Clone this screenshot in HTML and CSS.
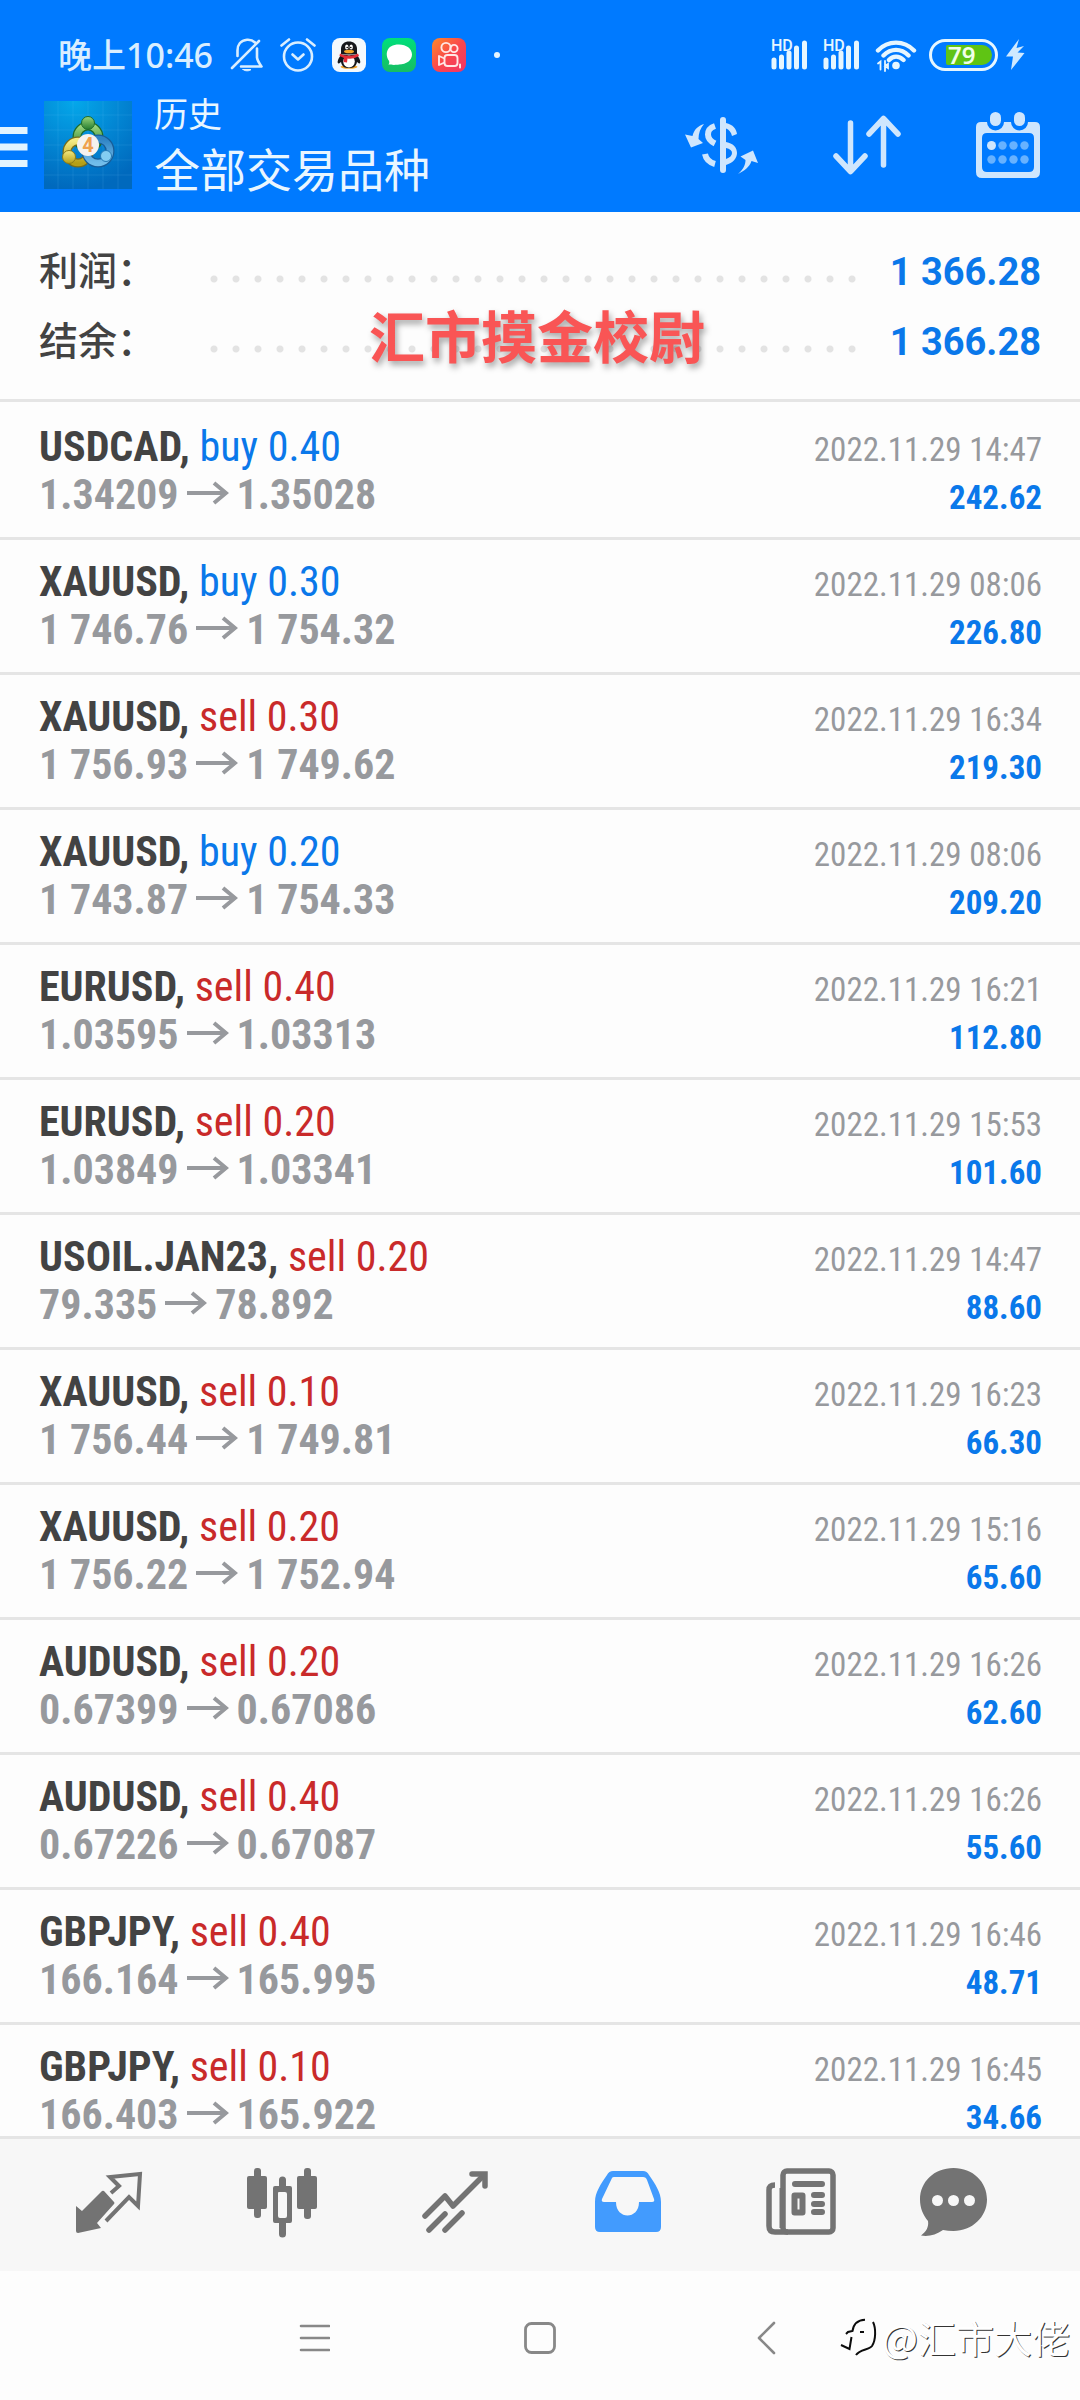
FILE: index.html
```html
<!DOCTYPE html>
<html lang="zh-CN">
<head>
<meta charset="utf-8">
<title>历史</title>
<meta name="viewport" content="width=device-width, initial-scale=1">
<link rel="stylesheet" href="styles.css">
</head>
<body>
<div class="app">
  <header class="top">
    <div class="status">
      <span class="clock">晚上10:46</span>
      <div class="notices">
        <svg width="34" height="34" viewBox="0 0 34 34" fill="none" stroke="#d9eeff" stroke-width="2.6" stroke-linecap="round" stroke-linejoin="round"><path d="M2 30 29 3M25 4.500C22.500 2.200 19.500 1.600 17 1.800 10.500 2.400 7.500 7 7.500 12.500V18M27 10.500V19.500C27.500 23 29 25 31.500 28.500H11"/><path d="M13 31.500h8c-1 1.800-7 1.800-8 0z" fill="#d9eeff" stroke-width="1"/></svg>
        <svg width="36" height="34" viewBox="0 0 36 34" fill="none" stroke="#d9eeff" stroke-width="2.600" stroke-linecap="round" stroke-linejoin="round"><circle cx="18" cy="18.500" r="14"/><path d="M12.500 16.500 18 21.500 23.500 16.500M1.500 7.500 9 1.500M34.500 7.500 27 1.500"/></svg>
        <svg width="34" height="34" viewBox="0 0 34 34"><rect width="34" height="34" rx="8" fill="#f4f9fd"/><ellipse cx="17" cy="28.800" rx="8.500" ry="2" fill="#f0a32c"/><path d="M9 17C5 22 5 26 7 25.500L9 24C10 29 13 30 17 30S24 29 25 24L27 25.500C29 26 29 22 25 17Z" fill="#15171c"/><ellipse cx="17" cy="23.500" rx="5.800" ry="6" fill="#fff"/><path d="M9 16.500V11C9 6 12.500 3.500 17 3.500S25 6 25 11V16.500Z" fill="#15171c"/><ellipse cx="14.800" cy="9" rx="1.700" ry="2.500" fill="#fff"/><ellipse cx="19.200" cy="9" rx="1.700" ry="2.500" fill="#fff"/><circle cx="15.200" cy="9.500" r=".8"/><circle cx="18.800" cy="9.500" r=".8"/><ellipse cx="17" cy="13.500" rx="5" ry="1.800" fill="#f4a52b"/><path d="M8 15.500C13 18.500 21 18.500 26 15.500L27 18C22 21 18 21 15.500 20.500L15 24.500 11.500 24 12 20 7.500 18Z" fill="#e22c38"/></svg>
        <svg width="34" height="34" viewBox="0 0 34 34"><defs><linearGradient id="msg" x2="0" y2="1"><stop stop-color="#00df7b"/><stop offset="1" stop-color="#17bd63"/></linearGradient></defs><rect width="34" height="34" rx="8" fill="url(#msg)"/><path d="M17 6.500C24.500 6.500 30 10.800 30 16.500S24.500 26.500 17 26.500C15 27 9 27 6.500 26.500 7.500 25 7.500 24 6.800 22.500 3 17 3.800 6.500 17 6.500Z" fill="#fff"/></svg>
        <svg width="34" height="34" viewBox="0 0 34 34" fill="none" stroke="#ffe7e5" stroke-width="1.900" stroke-linejoin="round"><defs><linearGradient id="kw" x2="1" y2="1"><stop stop-color="#ff8a2a"/><stop offset=".5" stop-color="#f9484c"/><stop offset="1" stop-color="#f23366"/></linearGradient></defs><rect width="34" height="34" rx="8" fill="url(#kw)" stroke="none"/><circle cx="14" cy="9.500" r="4.600"/><circle cx="22" cy="10.500" r="3.600"/><rect x="12.500" y="17" width="13" height="11" rx="3"/><path d="M12.500 20.500 7 18V27L12.500 24.500"/><path d="M28 26.500v3" stroke-linecap="round"/></svg>
        <span class="more-dot"></span>
      </div>
      <div class="system">
        <svg class="signal" width="36" height="34" viewBox="0 0 36 34"><text class="hd" x="0" y="13">HD</text><g stroke="#e6f6ff" stroke-width="5" stroke-linecap="round"><path d="M3 22v7M10.500 19v10M18 15v14M25.500 10v19M33.500 5v24"/></g></svg>
        <svg class="signal" width="36" height="34" viewBox="0 0 36 34"><text class="hd" x="0" y="13">HD</text><g stroke="#e6f6ff" stroke-width="5" stroke-linecap="round"><path d="M3 22v7M10.500 19v10M18 15v14M25.500 10v19M33.500 5v24"/></g></svg>
        <svg class="wifi" width="42" height="34" viewBox="0 0 42 34" fill="none" stroke="#e6f6ff" stroke-width="4.400" stroke-linecap="round"><path d="M3 12.500C13 2 29 2 39 12.500M8.500 17.500C16 10 26 10 33.500 17.500M14 22C18 17.500 24 17.500 28.500 22"/><circle cx="21" cy="27.500" r="3.800" fill="#e6f6ff" stroke="none"/><path d="M3 25.500 5.500 23.500V31.500M10 23V33M10 28l3-2v4z" stroke-width="1.800"/></svg>
        <svg class="battery" width="69" height="32" viewBox="0 0 69 32"><rect x="1.500" y="1.500" width="66" height="29" rx="14.500" fill="none" stroke="#e6f6ff" stroke-width="3"/><path d="M17 8Q17 6 19 6H53A10 10 0 0 1 53 26H19Q17 26 17 24Z" fill="#5fc414"/><text class="charge" x="19" y="25">79</text></svg>
        <svg width="19" height="32" viewBox="0 0 19 32"><path d="M13 0 0 17.500 7 17.500 5 31 18.500 14 11.500 13.500 18 7 10.500 9Z" fill="#cfe9ff"/></svg>
      </div>
    </div>
    <div class="toolbar">
      <button class="icon-btn menu" aria-label="菜单"><svg width="28" height="42" viewBox="0 0 28 42"><path d="M0 1h27.500v7H0zM0 17.500h27.500v7H0zM0 34h27.500v7H0z" fill="#e3f4ff"/></svg></button>
      <svg class="logo" width="88" height="88" viewBox="0 0 88 88">
        <defs>
          <radialGradient id="bg" cx=".35" cy="0" r="1"><stop stop-color="#04a8ea"/><stop offset=".55" stop-color="#0284d2"/><stop offset="1" stop-color="#0069bd"/></radialGradient>
          <linearGradient id="gr" x2="0" y2="1"><stop stop-color="#9bd67c"/><stop offset="1" stop-color="#257d2f"/></linearGradient>
          <linearGradient id="ye" x2="0" y2="1"><stop stop-color="#f3ea83"/><stop offset="1" stop-color="#b59f16"/></linearGradient>
          <linearGradient id="bl" x2="0" y2="1"><stop stop-color="#2e83c4"/><stop offset="1" stop-color="#72bdea"/></linearGradient>
        </defs>
        <rect width="88" height="88" fill="url(#bg)"/>
        <path d="M14 0v88M29 0v88M44 0v88M59 0v88M74 0v88M0 14h88M0 29h88M0 44h88M0 59h88M0 74h88" stroke="#7fd4ff" stroke-opacity=".13"/>
        <circle cx="44" cy="36" r="11" fill="none" stroke="#1d6b2a" stroke-width="9"/>
        <circle cx="44" cy="36" r="11" fill="none" stroke="url(#gr)" stroke-width="6.500"/>
        <circle cx="34" cy="51" r="11" fill="none" stroke="#776d1b" stroke-width="9"/>
        <circle cx="34" cy="51" r="11" fill="none" stroke="url(#ye)" stroke-width="6.500"/>
        <circle cx="54" cy="50" r="12" fill="none" stroke="#185d98" stroke-width="9"/>
        <circle cx="54" cy="50" r="12" fill="none" stroke="url(#bl)" stroke-width="6.500"/>
        <circle cx="44" cy="22" r="6.500" fill="url(#gr)" stroke="#1d6b2a"/>
        <circle cx="25" cy="56" r="6.500" fill="url(#ye)" stroke="#8a7a18"/>
        <circle cx="62" cy="55" r="5.500" fill="#84cdf2" stroke="#2679b5"/>
        <circle cx="44" cy="44" r="11" fill="#f5f2ee"/>
        <text class="four" x="44" y="51" text-anchor="middle">4</text>
      </svg>
      <div class="titles">
        <span class="subtitle">历史</span>
        <h1>全部交易品种</h1>
      </div>
      <div class="actions">
        <button class="icon-btn" aria-label="交易品种"><svg width="74" height="68" viewBox="0 0 74 68"><path d="M36 9a3 3 0 0 1 6 0V12C49 13.500 52.500 18 53 23L48 25C47 21 45 18.500 42 17.500V31C50 32.500 53 37 53 42S49 52 42 54V59a3 3 0 0 1-6 0ZM42 37V48C46 46.500 48 44.500 48 42S46 38 42 37Z" fill="#cfe6fd"/><path d="M31 15C25 17 24 20 24 23.500S26 30 31 32.500M21 43C22 48 25.500 51.500 31 53" fill="none" stroke="#cfe6fd" stroke-width="6"/><path d="M20 13C14 15 10 18.500 8.500 25L1 23.500 7 36.500 19 32 14.500 28C14.500 22 16.500 17 20 13Z" fill="#cfe6fd"/><path d="M54 63C59.500 58 61.500 54 61.500 49L56.500 45.500 69 39.500 74 52 67.500 50C65.500 56 60 60 54 63Z" fill="#cfe6fd"/></svg></button>
        <button class="icon-btn" aria-label="排序"><svg width="68" height="68" viewBox="0 0 68 68" fill="none" stroke="#cfe6fd" stroke-width="5.500" stroke-linecap="round" stroke-linejoin="round"><path d="M17.500 12V60M3 45 17.500 60.500 32 45M50.500 54V8M36 23 50.500 7.500 65 23"/></svg></button>
        <button class="icon-btn" aria-label="日期"><svg width="64" height="68" viewBox="0 0 64 68"><path d="M5 11H11A8 8 0 0 0 28 11H35A8 8 0 0 0 52 11H59Q64 11 64 16V61Q64 67 58 67H6Q0 67 0 61V16Q0 11 5 11ZM11 22Q6 22 6 27V56Q6 61 11 61H53Q58 61 58 56V27Q58 22 53 22Z" fill="#cfe6fd" fill-rule="evenodd"/><rect x="14" y="1" width="11" height="14" rx="5.500" fill="#cfe6fd"/><rect x="38" y="1" width="11" height="14" rx="5.500" fill="#cfe6fd"/><circle cx="15.500" cy="34.500" r="4.500" fill="#cfe6fd"/><g fill="#67b2ff"><circle cx="26.500" cy="34.500" r="4.200"/><circle cx="37.500" cy="34.500" r="4.200"/><circle cx="48.500" cy="34.500" r="4.200"/><circle cx="15.500" cy="48.500" r="4.200"/><circle cx="26.500" cy="48.500" r="4.200"/><circle cx="37.500" cy="48.500" r="4.200"/><circle cx="48.500" cy="48.500" r="4.200"/></g></svg></button>
      </div>
    </div>
  </header>

  <section class="summary">
    <dl>
      <div class="sum-row"><dt>利润：</dt><dd class="dots"></dd><dd class="total">1 366.28</dd></div>
      <div class="sum-row"><dt>结余：</dt><dd class="dots"></dd><dd class="total">1 366.28</dd></div>
    </dl>
    <span class="stamp">汇市摸金校尉</span>
  </section>

  <ul class="deals" id="deals"></ul>

  <nav class="tabs">
    <a href="#quotes" aria-label="行情"><svg width="68" height="70" viewBox="0 0 68 70"><path d="M1 38 7 43 27 23Q28 22.500 29 23L39 34Q40 35 39 36L22 55 26 60 3 65Q1 65 1 63Z" fill="#737373"/><path d="M36 25 44 18 35 9 65 6 63 38 54 29 31 53" fill="none" stroke="#737373" stroke-width="4" stroke-linejoin="miter"/></svg></a>
    <a href="#chart" aria-label="图表"><svg width="70" height="70" viewBox="0 0 70 70"><g fill="#737373"><rect x="0" y="8" width="20" height="33" rx="2"/><rect x="7" y="0" width="7" height="50" rx="3"/><rect x="50" y="8" width="20" height="33" rx="2"/><rect x="57" y="0" width="7" height="51" rx="3"/><path d="M32 12a3 3 0 0 1 7 0v6h4q2 0 2 2v33q0 2-2 2h-4v11a3 3 0 0 1-7 0V55h-4q-2 0-2-2V20q0-2 2-2h4zM32 24q-1 0-1 1v23q0 2 2 2h5q2 0 2-2V26q0-2-2-2z" fill-rule="evenodd"/></g></svg></a>
    <a href="#trade" aria-label="交易"><svg width="66" height="70" viewBox="0 0 66 70" fill="none" stroke="#737373" stroke-width="5.500" stroke-linecap="round" stroke-linejoin="round"><path d="M3 48 23 28 31 38 62 7"/><path d="M50 6H63V18" stroke-linejoin="miter"/><path d="M7 62 23 46M23 62 40 45"/></svg></a>
    <a href="#history" aria-label="历史" aria-current="page"><svg width="68" height="70" viewBox="0 0 68 70"><path d="M13 7Q15 3 19 3H49Q53 3 55 7C61 16 67 24 67 34V59Q67 64 62 64H6Q1 64 1 59V34C1 24 7 16 13 7ZM18 10 8 31Q7 34 10 34H22C22 52 45 52 45 34H58Q61 34 60 31L53 12Q52 9 49 9H20Q18.500 9 18 10Z" fill="#429bfe" fill-rule="evenodd"/></svg></a>
    <a href="#news" aria-label="新闻"><svg width="70" height="70" viewBox="0 0 70 70" fill="none" stroke="#737373"><rect x="17" y="3" width="50" height="61" rx="4" stroke-width="5.500"/><path d="M9 17Q3 17 3 22V58Q3 64 9 64H22" stroke-width="5.500"/><path d="M15 20V60" stroke-width="3"/><path d="M29 16H56M48 27H56M48 36H56M48 44H56" stroke-width="6" stroke-linecap="round"/><rect x="28.500" y="27.500" width="8" height="17" stroke-width="6" stroke-linejoin="round"/></svg></a>
    <a href="#mail" aria-label="消息"><svg width="67" height="70" viewBox="0 0 67 70"><path d="M33.500 0C53 0 67 14 67 31.500S52 63 33.500 63Q28 63 23 62C16 67 8 69 1 67.500 6 64 9 59 8 53 3 47 0 40 0 31.500 0 14 14 0 33.500 0Z" fill="#737373"/><g fill="#f7f7f7"><circle cx="17.500" cy="32.500" r="5.500"/><circle cx="33.500" cy="32.500" r="5.500"/><circle cx="49.500" cy="32.500" r="5.500"/></g></svg></a>
  </nav>

  <footer class="system-nav">
    <button class="icon-btn" aria-label="最近任务"><svg width="32" height="34" viewBox="0 0 32 34" stroke="#888" stroke-width="2.600" stroke-linecap="round"><path d="M3 5H31M3 17H31M3 29H31"/></svg></button>
    <button class="icon-btn" aria-label="主页"><svg width="32" height="34" viewBox="0 0 32 34" fill="none" stroke="#888" stroke-width="2.800"><rect x="1.500" y="2.500" width="29" height="29" rx="6"/></svg></button>
    <button class="icon-btn" aria-label="返回"><svg width="32" height="34" viewBox="0 0 32 34" fill="none" stroke="#888" stroke-width="2.600" stroke-linecap="round" stroke-linejoin="round"><path d="M24 2 9 17 24 32"/></svg></button>
    <div class="author"><svg width="38" height="38" viewBox="0 0 38 38" fill="none" stroke="#0c0c0c" stroke-width="2"><path d="M6 16 8 14 12.500 13C13.500 6 18 2 25 1.700M20 14H24M11.500 19 9.500 31 1 27"/><path d="M33 4C36 10 36 22 32 28 29 32 20 31 16 37"/></svg><span>@汇市大佬</span></div>
  </footer>
</div>
<script src="deals.js"></script>
</body>
</html>
```

FILE: deals.js
```js
const deals = [
  ["USDCAD", "buy", "0.40", "1.34209", "1.35028", "14:47", "242.62"],
  ["XAUUSD", "buy", "0.30", "1 746.76", "1 754.32", "08:06", "226.80"],
  ["XAUUSD", "sell", "0.30", "1 756.93", "1 749.62", "16:34", "219.30"],
  ["XAUUSD", "buy", "0.20", "1 743.87", "1 754.33", "08:06", "209.20"],
  ["EURUSD", "sell", "0.40", "1.03595", "1.03313", "16:21", "112.80"],
  ["EURUSD", "sell", "0.20", "1.03849", "1.03341", "15:53", "101.60"],
  ["USOIL.JAN23", "sell", "0.20", "79.335", "78.892", "14:47", "88.60"],
  ["XAUUSD", "sell", "0.10", "1 756.44", "1 749.81", "16:23", "66.30"],
  ["XAUUSD", "sell", "0.20", "1 756.22", "1 752.94", "15:16", "65.60"],
  ["AUDUSD", "sell", "0.20", "0.67399", "0.67086", "16:26", "62.60"],
  ["AUDUSD", "sell", "0.40", "0.67226", "0.67087", "16:26", "55.60"],
  ["GBPJPY", "sell", "0.40", "166.164", "165.995", "16:46", "48.71"],
  ["GBPJPY", "sell", "0.10", "166.403", "165.922", "16:45", "34.66"]
];

const arrow = '<svg class="arrow" width="42" height="24" viewBox="0 0 42 24" fill="none" stroke="#97999d" stroke-width="4"><path d="M0 12H39M27 2 39 12 27 22"/></svg>';

document.getElementById("deals").innerHTML = deals.map(([symbol, side, lots, open, close, time, profit]) => `
  <li class="deal">
    <div class="deal-line">
      <span class="symbol">${symbol}, <span class="${side}">${side} ${lots}</span></span>
      <time class="time">2022.11.29 ${time}</time>
    </div>
    <div class="deal-line">
      <span class="prices">${open}${arrow}${close}</span>
      <span class="profit">${profit}</span>
    </div>
  </li>`).join("");
```

FILE: styles.css
```css
* { box-sizing: border-box; }

body {
  margin: 0;
  background: #fdfdfd;
  color: #434343;
  font-family: Roboto, "Noto Sans CJK SC", sans-serif;
}

svg { display: block; flex: none; }

.app {
  display: flex;
  flex-direction: column;
  height: 100vh;
}

.icon-btn {
  padding: 0;
  border: 0;
  background: none;
}

/* header */
.top {
  flex: none;
  background: #007aff;
  color: #e9f6ff;
  font-family: "Noto Sans CJK SC", sans-serif;
}

.status {
  display: flex;
  align-items: center;
  padding: 30px 55px 0 58px;
}

.clock {
  font: 500 34px/50px "Noto Sans", "Noto Sans CJK SC", sans-serif;
  color: #d9eeff;
}

.notices {
  display: flex;
  align-items: center;
  gap: 16px;
  margin-left: 17px;
}

.more-dot {
  width: 6px;
  height: 6px;
  margin-left: 12px;
  border-radius: 3px;
  background: #e6f6ff;
}

.system {
  display: flex;
  align-items: center;
  gap: 16px;
  margin-left: auto;
}

.signal { overflow: visible; }
.wifi { margin-right: -4px; }
.battery { margin-right: -8px; }

.hd {
  font: 500 16px Roboto, sans-serif;
  fill: #e6f6ff;
}

.charge {
  font: 600 24px "Noto Sans", sans-serif;
  fill: #f0ffe8;
}

.toolbar {
  display: flex;
  align-items: center;
  padding: 6px 40px 8px 0;
}

.menu { padding-top: 4px; }

.logo { margin-left: 16px; }

.titles {
  display: flex;
  flex-direction: column;
  margin-left: 22px;
  padding-bottom: 10px;
  line-height: 54px;
}

.subtitle { font-size: 34px; }

.titles h1 {
  margin: 0;
  font-size: 46px;
  font-weight: 400;
}

.actions {
  display: flex;
  gap: 75px;
  margin-left: auto;
}

.four {
  font: 700 20px Roboto, sans-serif;
  fill: #efa14e;
}

/* summary */
.summary {
  position: relative;
  flex: none;
  padding: 24px 39px 23px;
  border-bottom: 3px solid #e5e5e5;
}

.summary dl { margin: 0; }

.sum-row {
  display: flex;
  align-items: center;
  height: 70px;
}

.sum-row dt {
  width: 164px;
  padding-bottom: 6px;
  font: 500 39px/64px "Noto Sans CJK SC", sans-serif;
}

.dots {
  flex: 1;
  height: 8px;
  margin: 16px 28px 0 0;
  background: radial-gradient(circle, #e3e3e3 3px, transparent 4px) 0 0 / 22px 8px repeat-x;
}

.total {
  margin: 0;
  padding-top: 2px;
  color: #0a78ea;
  font-size: 38px;
  font-weight: 700;
}

.stamp {
  position: absolute;
  inset: 84px 0 auto;
  padding-right: 6px;
  text-align: center;
  color: #f95555;
  font: 700 56px/76px "Noto Sans CJK SC", sans-serif;
  text-shadow: 2px 4px 6px rgba(0, 0, 0, .35);
}

/* deals */
.deals {
  flex: 1;
  min-height: 0;
  margin: 0;
  padding: 3px 0 0;
  overflow: auto;
  scrollbar-width: none;
  list-style: none;
  font-family: "Roboto Condensed", "Liberation Sans Narrow", sans-serif;
}

.deal {
  padding: 18px 38px 18px 39px;
  border-bottom: 3px solid #e5e5e5;
}

.deal-line {
  display: flex;
  justify-content: space-between;
  align-items: baseline;
  height: 48px;
  line-height: 48px;
}

.symbol { font-size: 42px; font-weight: 700; }
.buy, .sell { font-weight: 400; }
.buy { color: #0a78ea; }
.sell { color: #c92a2a; }

.time { color: #97999d; font-size: 33px; }

.prices {
  color: #97999d;
  font-size: 42px;
  font-weight: 700;
}

.arrow {
  display: inline-block;
  margin: 0 8px;
  vertical-align: 4px;
}

.profit {
  color: #0a78ea;
  font-size: 33px;
  font-weight: 700;
}

/* bottom tabs */
.tabs {
  display: grid;
  flex: none;
  grid-template-columns: repeat(5, 173fr) 132fr;
  padding: 29px 61px 33px 22px;
  border-top: 3px solid #e5e5e5;
  background: #f7f7f7;
}

.tabs a { display: flex; justify-content: center; }

.system-nav {
  position: relative;
  display: flex;
  flex: none;
  justify-content: center;
  align-items: center;
  gap: 194px;
  padding: 50px 0 45px;
}

.author {
  position: absolute;
  right: 10px;
  bottom: 35px;
  display: flex;
  align-items: center;
  gap: 4px;
  color: #fff;
  font: 400 38px/56px "Noto Sans CJK SC", sans-serif;
  text-shadow: 1px 1px 0 #333;
}
```
